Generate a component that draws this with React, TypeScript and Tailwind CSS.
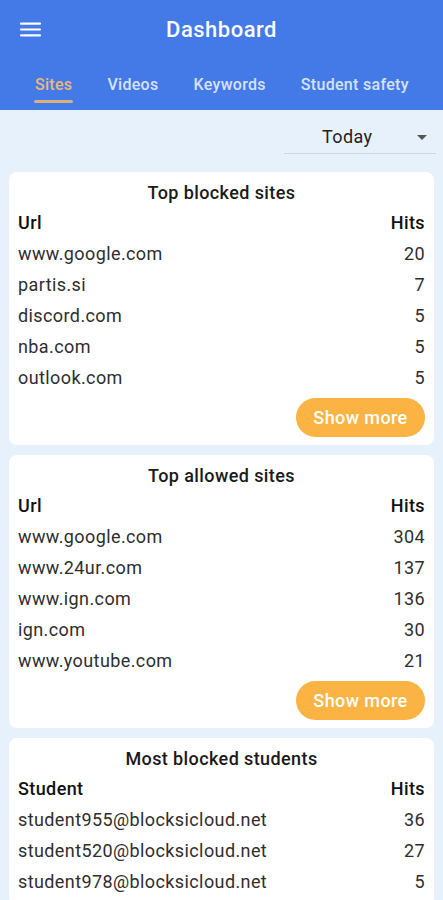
import React from "react";

type Row = [string, string];

const Card = ({ title, col, rows, more = true }: { title: string; col: string; rows: Row[]; more?: boolean }) => (
  <div className="mx-[9px] rounded-[8px] bg-white px-[9px] pt-[6px] pb-[8px] tracking-[0.4px]">
    <div className="h-[29px] flex items-center justify-center text-[18px] font-medium text-[#1a1a1a]">{title}</div>
    <div className="h-[31px] flex items-center justify-between text-[18px] font-medium text-[#111]">
      <span>{col}</span>
      <span>Hits</span>
    </div>
    {rows.map(([a, b]) => (
      <div key={a} className="h-[31px] flex items-center justify-between text-[18px] text-[#2e2e2e]">
        <span>{a}</span>
        <span>{b}</span>
      </div>
    ))}
    {more && (
      <div className="flex justify-end mt-[5px]">
        <button className="h-[39px] w-[129px] rounded-full bg-[#fbb443] text-white text-[18px] font-medium tracking-[0.4px]">Show more</button>
      </div>
    )}
  </div>
);

export default function App() {
  return (
    <div className="h-[900px] bg-[#e7f1fc] overflow-hidden" style={{ fontFamily: "Roboto, 'Noto Sans', sans-serif" }}>
      <div className="bg-[#4479e8] h-[110px] flex flex-col">
        <div className="relative h-[58px] flex items-center justify-center">
          <svg className="absolute left-[20px] top-[22px]" width="21" height="15" viewBox="0 0 21 15">
            <rect x="0" y="0.5" width="21" height="2.2" rx="1" fill="white" />
            <rect x="0" y="6.4" width="21" height="2.2" rx="1" fill="white" />
            <rect x="0" y="12.3" width="21" height="2.2" rx="1" fill="white" />
          </svg>
          <span className="text-white text-[22px] font-medium tracking-[0.5px]">Dashboard</span>
        </div>
        <div className="flex pl-[35px] gap-[35px] text-[16px] font-medium tracking-[0.3px]">
          <span className="relative h-[52px] flex items-center pt-[2px] text-[#e9b87c]">
            Sites
            <span className="absolute left-[-1px] right-[-1px] top-[42px] h-[3px] rounded-full bg-[#d8b07e]" />
          </span>
          <span className="h-[52px] flex items-center pt-[2px] text-[#d7e2fa]">Videos</span>
          <span className="h-[52px] flex items-center pt-[2px] text-[#d7e2fa]">Keywords</span>
          <span className="h-[52px] flex items-center pt-[2px] text-[#d7e2fa]">Student safety</span>
        </div>
      </div>
      <div className="flex justify-end pr-[7px] pt-[10px]">
        <div className="w-[152px] h-[34px] border-b border-[#cfd8e2] flex items-center relative">
          <span className="ml-[38px] text-[18px] text-[#222] tracking-[0.4px]">Today</span>
          <svg className="absolute right-[9px] top-[15px]" width="10" height="5" viewBox="0 0 10 5">
            <path d="M0 0 L10 0 L5 5 Z" fill="#555" />
          </svg>
        </div>
      </div>
      <div className="flex flex-col gap-[10px] mt-[18px]">
        <Card
          title="Top blocked sites"
          col="Url"
          rows={[
            ["www.google.com", "20"],
            ["partis.si", "7"],
            ["discord.com", "5"],
            ["nba.com", "5"],
            ["outlook.com", "5"],
          ]}
        />
        <Card
          title="Top allowed sites"
          col="Url"
          rows={[
            ["www.google.com", "304"],
            ["www.24ur.com", "137"],
            ["www.ign.com", "136"],
            ["ign.com", "30"],
            ["www.youtube.com", "21"],
          ]}
        />
        <Card
          title="Most blocked students"
          col="Student"
          more={false}
          rows={[
            ["student955@blocksicloud.net", "36"],
            ["student520@blocksicloud.net", "27"],
            ["student978@blocksicloud.net", "5"],
          ]}
        />
      </div>
    </div>
  );
}
